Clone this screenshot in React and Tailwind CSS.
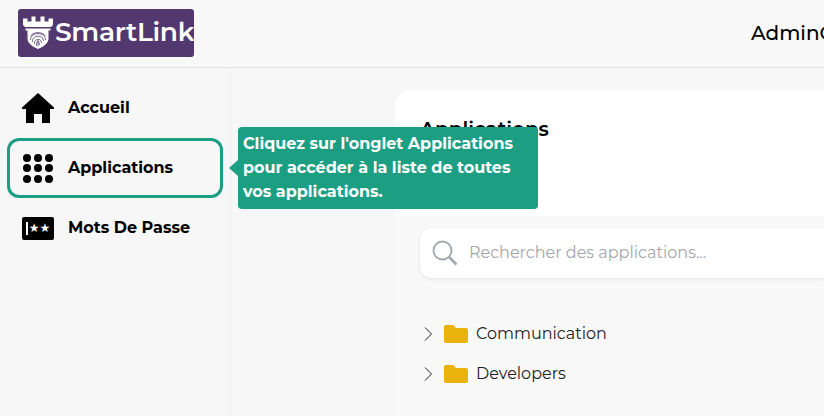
import React from "react";

const Font = "font-['Montserrat','Inter','Liberation_Sans',sans-serif]";

function Castle() {
  return (
    <svg viewBox="0 0 32 36" className="w-[32px] h-[36px] shrink-0" fill="none">
      <path d="M1 3.500h4.500v3h4V1.500h4v5h5v-5h4v5h4v-3H31V9c0 1-.500 2-2 3H3C1.500 11 1 10 1 9z" fill="#fff" />
      <path d="M3.500 13.500h25v2h-2V24c0 3.500-4.500 7.500-10.500 10C10 31.500 5.500 27.500 5.500 24v-8.500h-2z" fill="#fff" />
      <g stroke="#53386f" strokeWidth="0.8" fill="none">
        <path d="M8.500 21c2.500-4.500 12.500-4.500 15 0" />
        <path d="M8.500 25c0-8.500 15-8.500 15 0" />
        <path d="M10.500 27c-.500-7.500 11-7.500 11-1" />
        <path d="M12.500 29c-.500-6 7-6 7-1" />
        <path d="M14.500 30.500c-.500-5.500 3-5.500 3-.500" />
        <path d="M16 25v6.500" />
      </g>
    </svg>
  );
}

function Home() {
  return (
    <svg viewBox="0 0 32 30" className="w-[32px] h-[30px]" fill="#000">
      <path d="M16 0L32 14.500c.6.8 0 1.500-.7 1.500H28v14h-8v-9h-8v9H4V16H.7c-.7 0-1.300-.7-.7-1.500z" />
    </svg>
  );
}

function Grid() {
  return (
    <div className="grid grid-cols-3 gap-x-[3px] gap-y-[2.500px] w-[30px]">
      {Array.from({ length: 9 }).map((_, i) => (
        <span key={i} className="w-[8px] h-[8px] rounded-full bg-black" />
      ))}
    </div>
  );
}

function Folder() {
  return (
    <svg viewBox="0 0 24 18" className="w-[24px] h-[18px] shrink-0" fill="#eab30c">
      <path d="M2 0h6.500c.8 0 1.200.3 1.700.9L12 3h10c1.100 0 2 .9 2 2v11c0 1.100-.9 2-2 2H2c-1.100 0-2-.9-2-2V2C0 .9.9 0 2 0z" />
    </svg>
  );
}

function Chevron() {
  return (
    <svg viewBox="0 0 10 16" className="w-[10px] h-[16px] shrink-0" fill="none" stroke="#222" strokeWidth="1">
      <path d="M2 1.500l6.500 6.500-6.500 6.500" />
    </svg>
  );
}

function NavItem({ icon, label, active }) {
  return (
    <div
      className={`h-[60px] flex items-center rounded-[12px] text-[16px] font-bold text-black ${
        active ? "border-[3px] border-[#1b9e82] pl-[12px]" : "pl-[15px]"
      }`}
    >
      <div className="w-[32px] flex justify-center shrink-0">{icon}</div>
      <span className="ml-[14px]">{label}</span>
    </div>
  );
}

export default function App() {
  return (
    <div className={`w-[824px] h-[416px] overflow-hidden bg-[#f7f7f7] relative ${Font}`}>
      <header className="h-[68px] border-b border-[#e3e3e3] bg-[#f8f8f8] flex items-center justify-between pl-[18px]">
        <div className="w-[176px] h-[48px] -mt-[2px] rounded-[3px] bg-[#53386f] flex items-center pl-[4px] gap-[1px]">
          <Castle />
          <span className="text-white font-semibold text-[26.500px] tracking-[-0.3px] leading-none">SmartLink</span>
        </div>
        <div className="text-[20px] font-medium text-black whitespace-nowrap w-[73px] overflow-hidden -mt-[2px]">AdminCorp</div>
      </header>
      <div className="flex h-[348px]">
        <aside className="w-[231px] shrink-0 border-r border-[#eeeeee] bg-[#f7f7f7] pt-[10px] pl-[7px] pr-[7px]">
          <NavItem icon={<Home />} label="Accueil" />
          <NavItem icon={<Grid />} label="Applications" active />
          <NavItem icon={
            <div className="w-[32px] h-[23px] rounded-[2px] bg-black text-white font-bold flex items-center justify-center gap-[1px] font-['DejaVu_Sans',sans-serif] text-[12px] leading-none">
              <span className="w-[2px] h-[13px] bg-white" />
              <span>★★</span>
            </div>
          } label="Mots De Passe" />
        </aside>
        <main className="flex-1 pl-[164px] pt-[22px]">
          <section className="rounded-tl-[16px] bg-[#f9f9f9] h-full">
            <div className="h-[126px] bg-white rounded-tl-[16px] pl-[25px] pt-[25px]">
              <h1 className="text-[20px] font-semibold text-black leading-[28px]">Applications</h1>
            </div>
            <div className="pl-[25px] pt-[12px]">
              <div className="h-[50px] bg-white rounded-l-[12px] shadow-[0_1px_4px_rgba(0,0,0,0.1)] flex items-center pl-[12px]">
                <svg viewBox="0 0 26 26" className="w-[26px] h-[26px] shrink-0" fill="none" stroke="#a3a7ae" strokeWidth="1.800">
                  <circle cx="10.500" cy="10.500" r="9" />
                  <path d="M17 17l7.500 7.500" strokeWidth="2.600" />
                </svg>
                <span className="ml-[11px] text-[16px] text-[#a3a7ae]">Rechercher des applications...</span>
              </div>
              <div className="mt-[47px] flex flex-col gap-[22px]">
                {["Communication", "Developers"].map((n) => (
                  <div key={n} className="h-[18px] flex items-center pl-[3px]">
                    <Chevron />
                    <span className="ml-[11px] flex"><Folder /></span>
                    <span className="ml-[8px] text-[16px] text-[#222]">{n}</span>
                  </div>
                ))}
              </div>
            </div>
          </section>
        </main>
      </div>
      <div className="absolute left-[238px] top-[127px] w-[300px] h-[82px] rounded-[4px] bg-[#1b9e82] text-white font-bold text-[16px] leading-[24px] pl-[5px] pt-[5px]">
        <span className="absolute -left-[9px] top-[33px] w-0 h-0 border-y-[8px] border-y-transparent border-r-[9px] border-r-[#1b9e82]" />
        Cliquez sur l'onglet Applications
        <br />
        pour accéder à la liste de toutes
        <br />
        vos applications.
      </div>
    </div>
  );
}
